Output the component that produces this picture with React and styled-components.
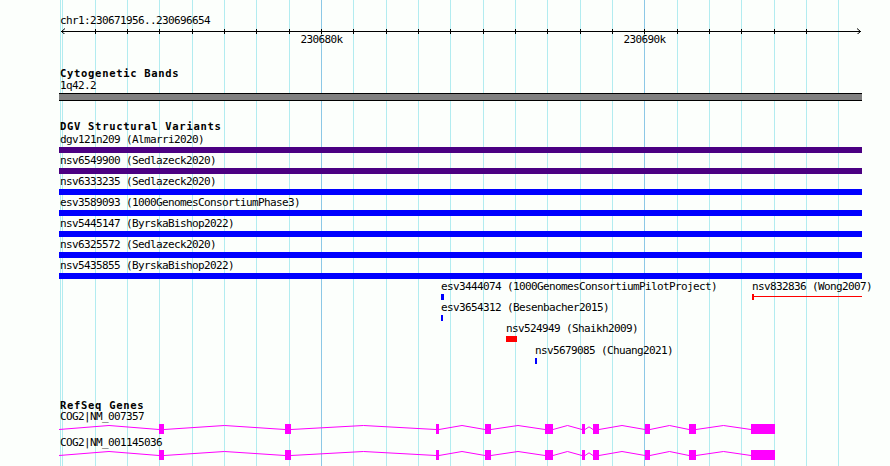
import styled, { createGlobalStyle } from "styled-components";

const GlobalStyle = createGlobalStyle`
  html, body {
    margin: 0;
    padding: 0;
    background: #fcfffc;
  }
  body {
    font-family: "DejaVu Sans Mono", "Liberation Mono", monospace;
    font-size: 11px;
    letter-spacing: -0.62px;
    color: #000;
  }
`;

// page x of gridlines (1 kb apart), majors every 10 kb
const GRID_START = 62.4;
const GRID_STEP = 32.33;
const gridLines = Array.from({ length: 25 }, (_, k) => ({
  x: Math.round(GRID_START + k * GRID_STEP),
  major: k === 8 || k === 18,
}));

const LEFT = 59;
const RIGHT = 862;
const TRACK_W = RIGHT - LEFT;

const Page = styled.div`
  position: relative;
  width: 890px;
  height: 466px;
  overflow: hidden;
  background: #fcfffc;
`;

const Grid = styled.div`
  position: absolute;
  inset: 0;
  pointer-events: none;
`;

const GridLine = styled.div`
  position: absolute;
  top: 0;
  bottom: 0;
  width: 1px;
  background: ${(p) => (p.$major ? "#8cc8e6" : "#b2ecf0")};
`;

const Content = styled.div`
  position: relative;
  display: flex;
  flex-direction: column;
  padding-left: ${LEFT}px;
  width: ${TRACK_W}px;
`;

const Text = styled.div`
  line-height: 11px;
  height: 11px;
  white-space: pre;
  padding-left: 1px;
  margin-top: ${(p) => p.$mt || 0}px;
`;

const Title = styled(Text)`
  font-size: 10.5px;
  font-weight: bold;
  letter-spacing: 0.7px;
`;

const Ruler = styled.div`
  display: flex;
  flex-direction: column;
  padding-top: 15px;
`;

const Axis = styled.svg`
  display: block;
  width: ${TRACK_W}px;
  height: 8px;
`;

const TickLabels = styled.div`
  position: relative;
  height: 11px;
`;

const TickLabel = styled.span`
  position: absolute;
  top: 0;
  line-height: 11px;
  transform: translateX(-50%);
`;

const BandBar = styled.div`
  margin-top: 2px;
  height: 6px;
  border-top: 1px solid #000;
  border-bottom: 1px solid #000;
  background: #808080;
`;

const Row = styled.div`
  display: flex;
  flex-direction: column;
  padding-top: 2px;
`;

const Bar = styled.div`
  margin-top: 2px;
  height: 6px;
  background: ${(p) => p.$color};
`;

const Canvas = styled.div`
  position: relative;
  height: ${(p) => p.$h}px;
`;

const Feature = styled.div`
  position: absolute;
  display: flex;
  flex-direction: column;
  align-items: flex-start;
`;

const Block = styled.div`
  margin: 2px 0 0 1px;
  height: 6px;
  width: ${(p) => p.$w}px;
  background: ${(p) => p.$color};
`;

const Range = styled.div`
  display: flex;
  align-items: flex-start;
  margin: 2px 0 0 1px;
  height: 6px;
`;

const RangeCap = styled.div`
  width: 2px;
  height: 6px;
  background: #ff0000;
`;

const RangeLine = styled.div`
  margin-top: 2px;
  width: ${(p) => p.$w}px;
  height: 1px;
  background: #ff0000;
`;

const GeneRow = styled.div`
  display: flex;
  flex-direction: column;
  padding-bottom: 2px;
`;

const GeneSvg = styled.svg`
  display: block;
  margin-top: 1px;
  width: ${TRACK_W}px;
  height: 12px;
`;

const variants = [
  { name: "dgv121n209 (Almarri2020)", color: "#4b0082" },
  { name: "nsv6549900 (Sedlazeck2020)", color: "#4b0082" },
  { name: "nsv6333235 (Sedlazeck2020)", color: "#0000ff" },
  { name: "esv3589093 (1000GenomesConsortiumPhase3)", color: "#0000ff" },
  { name: "nsv5445147 (ByrskaBishop2022)", color: "#0000ff" },
  { name: "nsv6325572 (Sedlazeck2020)", color: "#0000ff" },
  { name: "nsv5435855 (ByrskaBishop2022)", color: "#0000ff" },
];

// sparse variants: page x, top within canvas
const smallVariants = [
  { name: "esv3444074 (1000GenomesConsortiumPilotProject)", x: 441, y: 2, w: 3, color: "#0000ff" },
  { name: "esv3654312 (Besenbacher2015)", x: 441, y: 23, w: 2, color: "#0000ff" },
  { name: "nsv524949 (Shaikh2009)", x: 506, y: 44, w: 11, color: "#ff0000" },
  { name: "nsv5679085 (Chuang2021)", x: 535, y: 66, w: 2, color: "#0000ff" },
];

const exons = [
  [159, 164], [285, 291], [436, 439], [485, 491], [545, 553],
  [582, 585], [593, 599], [645, 650], [689, 696], [751, 775],
];

const genes = ["COG2|NM_007357", "COG2|NM_001145036"];

function Gene() {
  const introns = [];
  let start = LEFT;
  exons.forEach(([a, b]) => {
    const peak = Math.min(4, (a - start) / 3);
    introns.push(`${start - LEFT},6.5 ${(start + a) / 2 - LEFT},${6.5 - peak} ${a - LEFT},6.5`);
    start = b;
  });
  return (
    <GeneSvg viewBox={`0 0 ${TRACK_W} 12`}>
      {introns.map((p, i) => (
        <polyline key={i} points={p} fill="none" stroke="#ff00ff" strokeWidth="1" />
      ))}
      {exons.map(([a, b]) => (
        <rect key={a} x={a - LEFT} y="1" width={b - a} height="10" fill="#ff00ff" />
      ))}
    </GeneSvg>
  );
}

function AxisDrawing() {
  return (
    <Axis viewBox={`0 0 ${TRACK_W} 8`}>
      <line x1="2" y1="5.5" x2={TRACK_W - 1} y2="5.5" stroke="#000" />
      <polyline points="6,2.5 2.5,5.5 6,8.5" fill="none" stroke="#000" />
      <polyline points={`${TRACK_W - 5},2.5 ${TRACK_W - 1.5},5.5 ${TRACK_W - 5},8.5`} fill="none" stroke="#000" />
      {gridLines.slice(1, 24).map((g) => (
        <line key={g.x} x1={g.x - LEFT + 0.5} y1="3" x2={g.x - LEFT + 0.5} y2="8" stroke="#000" />
      ))}
    </Axis>
  );
}

export default function App() {
  return (
    <Page>
      <GlobalStyle />
      <Grid>
        <GridLine style={{ left: 60 }} />
        {gridLines.map((g) => (
          <GridLine key={g.x} $major={g.major} style={{ left: g.x }} />
        ))}
      </Grid>
      <Content>
        <Ruler>
          <Text>chr1:230671956..230696654</Text>
          <AxisDrawing />
          <TickLabels>
            <TickLabel style={{ left: 321.5 - LEFT }}>230680k</TickLabel>
            <TickLabel style={{ left: 644.5 - LEFT }}>230690k</TickLabel>
          </TickLabels>
        </Ruler>

        <Title $mt={23}>Cytogenetic Bands</Title>
        <Text $mt={1}>1q42.2</Text>
        <BandBar />

        <Title $mt={20}>DGV Structural Variants</Title>
        {variants.map((v) => (
          <Row key={v.name}>
            <Text>{v.name}</Text>
            <Bar $color={v.color} />
          </Row>
        ))}
        <Canvas $h={100}>
          {smallVariants.map((v) => (
            <Feature key={v.name} style={{ left: v.x - LEFT - 1, top: v.y }}>
              <Text>{v.name}</Text>
              <Block $w={v.w} $color={v.color} />
            </Feature>
          ))}
          <Feature style={{ left: 752 - LEFT - 1, top: 2 }}>
            <Text>nsv832836 (Wong2007)</Text>
            <Range>
              <RangeCap />
              <RangeLine $w={RIGHT - 752 - 2} />
            </Range>
          </Feature>
        </Canvas>

        <Title $mt={21}>RefSeq Genes</Title>
        {genes.map((g) => (
          <GeneRow key={g}>
            <Text>{g}</Text>
            <Gene />
          </GeneRow>
        ))}
      </Content>
    </Page>
  );
}
